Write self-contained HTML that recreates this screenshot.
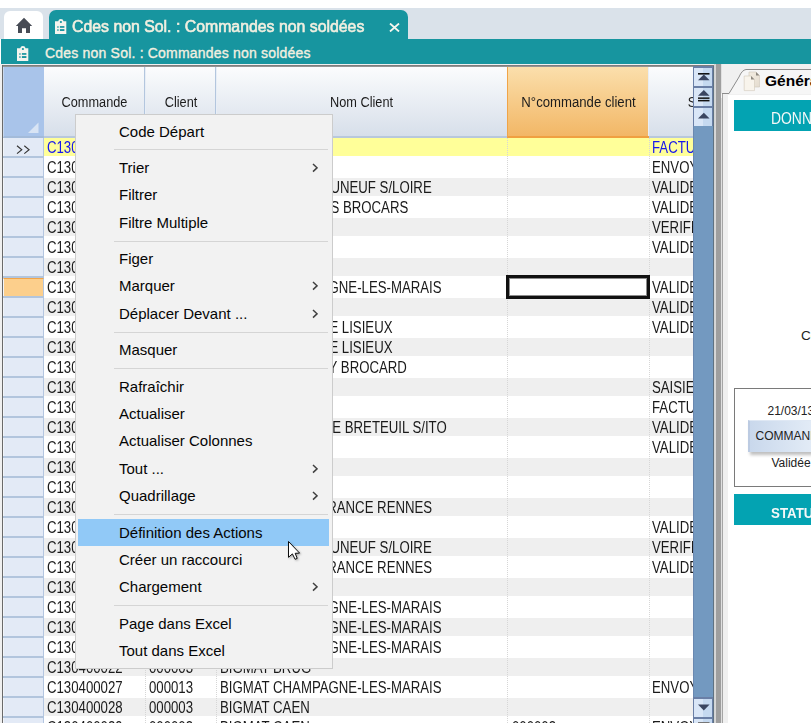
<!DOCTYPE html>
<html><head><meta charset="utf-8"><style>
*{box-sizing:border-box;margin:0;padding:0}
html,body{width:811px;height:723px;overflow:hidden;background:#fff;font-family:"Liberation Sans",sans-serif;position:relative}
.abs{position:absolute}
#tabbg{position:absolute;left:0;top:8px;width:811px;height:31px;background:#dae2ea}
#home{position:absolute;left:4px;top:11px;width:39px;height:30px;background:#fff;border-radius:6px 6px 0 0}
#tab{position:absolute;left:49px;top:10px;width:359px;height:31px;background:#17959f;border-radius:7px 7px 0 0}
#tabtxt{position:absolute;left:72px;top:18px;font-size:16px;color:#f2efe0;white-space:nowrap;transform:scaleX(0.99);transform-origin:0 0;-webkit-text-stroke:0.6px #f2efe0}
#tabx{position:absolute;left:389px;top:23px;width:11px;height:9px}
#bar{position:absolute;left:1px;top:39px;width:810px;height:25px;background:#17959f}
#bartxt{position:absolute;left:45px;top:45px;font-size:14px;color:#f2efe0;white-space:nowrap;letter-spacing:0.2px;-webkit-text-stroke:0.35px #f2efe0}
#main{position:absolute;left:0;top:64px;width:811px;height:659px;background:#f0f0f0}
#gridbg{position:absolute;left:2px;top:65px;width:692px;height:658px;background:#fff}
#gtop{position:absolute;left:2px;top:65px;width:712px;height:2px;background:linear-gradient(#737373,#a0a0a0)}
#gleft{position:absolute;left:2px;top:65px;width:1px;height:658px;background:#6a6a6a}
.bg{position:absolute;left:44px;width:649px;height:18px}
.rh{position:absolute;left:3px;width:41px;height:18px;border-left:1px solid #f2f5fa;border-right:1px solid #b4c6e0}
.rsep{position:absolute;left:3px;width:41px;height:2px;background:#b2c5dd}
.vl{position:absolute;top:138px;height:585px;width:1px;border-left:1px dotted #d6d6d6}
.c{position:absolute;height:18px;overflow:hidden;white-space:nowrap}
.t{display:inline-block;font-size:16px;line-height:18px;transform:scaleX(0.825);transform-origin:0 0;position:relative;top:1px}
.tr{transform-origin:100% 0}
.hd{position:absolute;top:67px;height:71px;background:linear-gradient(#fbfcfd,#d7dfea);border-bottom:2px solid #b8c8dc;overflow:hidden}
.hd span{position:absolute;top:26.5px;left:0;width:100%;text-align:center;font-size:14px;color:#1c1c1c;white-space:nowrap}
.hsep{position:absolute;top:67px;height:69px;width:2px;background:linear-gradient(90deg,#b3c6de 50%,#e8eef6 50%)}
#scroll{position:absolute;left:693px;top:66px;width:21px;height:657px;background:#7399c0;border-left:1px solid #6a88b0;border-right:1px solid #5f7282}
.sbf{position:absolute;left:693px;width:20px;height:20px;background:#6a7fa6}
.sbi{position:absolute;left:1px;top:2px;width:18px;height:17.5px;background:linear-gradient(90deg,#d9e6f7 50%,#c5d9f0 50%)}
.sbi svg{position:absolute;left:0;top:0}
#split{position:absolute;left:714px;top:64px;width:8px;height:659px;background:linear-gradient(90deg,#d2d2d2 0,#d8d8d8 2px,#9e9e9e 2px,#9e9e9e 7px,#e0e0e0 7px)}
#menu{position:absolute;left:75px;top:114px;width:258px;height:555px;background:#f2f2f2;border:1px solid #cccccc;padding:2.5px 3px 2px 2px;}
.mi{position:relative;height:27.4px;font-size:15px;color:#050505}
.mi.hl{background:#91c9f7}
.mt{position:absolute;left:41px;top:5px;white-space:nowrap}
.arr{position:absolute;left:233.5px;top:9px}
.msep{height:9px;position:relative}
.msep:after{content:"";position:absolute;left:36px;right:1px;top:4.5px;height:1px;background:#d5d5d5}
</style></head><body>
<div id="tabbg"></div>
<div id="home"></div>
<svg class="abs" style="left:15px;top:17px" width="18" height="17" viewBox="0 0 18 17"><path d="M9 0.8 L17.2 9 L15 9 L15 16 L11 16 L11 11.2 L7 11.2 L7 16 L3 16 L3 9 L0.8 9 Z" fill="#474b55"/></svg>
<div id="tab"></div>
<svg class="abs" style="left:54.6px;top:19px" width="12" height="16" viewBox="0 0 12 16"><path d="M0 2.3 H3.2 Q3.6 0 5.9 0 Q8.2 0 8.6 2.3 H11.3 V14.9 H0 Z" fill="#f4f4ee"/><circle cx="5.9" cy="3" r="1.1" fill="#17959f"/><rect x="2.4" y="7.1" width="1.1" height="1.8" fill="#17959f"/><rect x="4.9" y="7.1" width="4.5" height="1.7" fill="#17959f"/><rect x="2.4" y="10.1" width="1.1" height="1.9" fill="#17959f"/><rect x="4.9" y="10.1" width="4.5" height="1.9" fill="#17959f"/></svg>
<div id="tabtxt">Cdes non Sol. : Commandes non soldées</div>
<svg id="tabx" viewBox="0 0 11 9"><path d="M1 0.5 L10 8.5 M10 0.5 L1 8.5" stroke="#f6f6ee" stroke-width="1.8"/></svg>
<div id="bar"></div>
<svg class="abs" style="left:17px;top:45.5px" width="12" height="16" viewBox="0 0 12 16"><path d="M0 2.3 H3.2 Q3.6 0 5.9 0 Q8.2 0 8.6 2.3 H11.3 V14.9 H0 Z" fill="#f4f4ee"/><circle cx="5.9" cy="3" r="1.1" fill="#17959f"/><rect x="2.4" y="7.1" width="1.1" height="1.8" fill="#17959f"/><rect x="4.9" y="7.1" width="4.5" height="1.7" fill="#17959f"/><rect x="2.4" y="10.1" width="1.1" height="1.9" fill="#17959f"/><rect x="4.9" y="10.1" width="4.5" height="1.9" fill="#17959f"/></svg>
<div id="bartxt">Cdes non Sol. : Commandes non soldées</div>
<div id="main"></div>
<div id="gridbg"></div>
<div id="gtop"></div>
<div id="gleft"></div>
<div class="abs" style="left:3px;top:67px;width:41px;height:71px;background:#a9c4ea;border-bottom:2px solid #a3bbda;border-left:1px solid #c8d8ee"></div>
<svg class="abs" style="left:28px;top:122px" width="12" height="12"><path d="M0 11 L10.5 11 L10.5 0.5 Z" fill="#d8e4f4"/></svg>
<div class="hd" style="left:44px;width:101px"><span style="transform:scaleX(0.91)">Commande</span></div>
<div class="hd" style="left:145px;width:72px"><span style="transform:scaleX(0.91)">Client</span></div>
<div class="hd" style="left:216px;width:291px"><span style="transform:scaleX(0.91)">Nom Client</span></div>
<div class="hd" style="left:507px;width:142px;background:linear-gradient(#fbdfac,#f2b766);border-left:1px solid #f0a448;border-bottom:2px solid #f0a040"><span style="transform:scaleX(0.94)">N°commande client</span></div>
<div class="hd" style="left:649px;width:64px"><span style="transform:scaleX(0.91);left:0;width:111px">Statut</span></div>
<div class="hsep" style="left:144px"></div>
<div class="hsep" style="left:215px"></div>
<div class="hsep" style="left:648px;width:1px"></div>
<div class="bg" style="top:138px;background:#ffff99"></div><div class="rh" style="top:138px;background:#e3eaf6"></div><div class="rsep" style="top:156px"></div><svg class="abs" style="left:16px;top:145px" width="15" height="10"><path d="M1 0.8 L5.8 4.7 L1 8.6 M8.3 0.8 L13.1 4.7 L8.3 8.6" fill="none" stroke="#333" stroke-width="1.1"/></svg><div class="c" style="left:47px;width:98px;top:138px;color:#1717ee"><span class="t">C130400001</span></div><div class="c" style="left:149px;width:67px;top:138px;color:#1717ee"><span class="t">000003</span></div><div class="c" style="left:220px;width:287px;top:138px;color:#1717ee"><span class="t">BIGMAT CAEN</span></div><div class="c" style="left:652px;width:41px;top:138px;color:#1717ee"><span class="t">FACTURE</span></div><div class="bg" style="top:158px;background:#ffffff"></div><div class="rh" style="top:158px;background:#e3eaf6"></div><div class="rsep" style="top:176px"></div><div class="c" style="left:47px;width:98px;top:158px;color:#1a1a1a"><span class="t">C130400002</span></div><div class="c" style="left:149px;width:67px;top:158px;color:#1a1a1a"><span class="t">000003</span></div><div class="c" style="left:220px;width:287px;top:158px;color:#1a1a1a"><span class="t">BIGMAT CAEN</span></div><div class="c" style="left:652px;width:41px;top:158px;color:#1a1a1a"><span class="t">ENVOYE</span></div><div class="bg" style="top:178px;background:#efefef"></div><div class="rh" style="top:178px;background:#e3eaf6"></div><div class="rsep" style="top:196px"></div><div class="c" style="left:47px;width:98px;top:178px;color:#1a1a1a"><span class="t">C130400003</span></div><div class="c" style="left:149px;width:67px;top:178px;color:#1a1a1a"><span class="t">000003</span></div><div class="c" style="left:220px;width:212px;top:178px;color:#1a1a1a;text-align:right"><span class="t tr">UNEUF S/LOIRE</span></div><div class="c" style="left:652px;width:41px;top:178px;color:#1a1a1a"><span class="t">VALIDEE</span></div><div class="bg" style="top:198px;background:#ffffff"></div><div class="rh" style="top:198px;background:#e3eaf6"></div><div class="rsep" style="top:216px"></div><div class="c" style="left:47px;width:98px;top:198px;color:#1a1a1a"><span class="t">C130400004</span></div><div class="c" style="left:149px;width:67px;top:198px;color:#1a1a1a"><span class="t">000003</span></div><div class="c" style="left:220px;width:188.5px;top:198px;color:#1a1a1a;text-align:right"><span class="t tr">S BROCARS</span></div><div class="c" style="left:652px;width:41px;top:198px;color:#1a1a1a"><span class="t">VALIDEE</span></div><div class="bg" style="top:218px;background:#efefef"></div><div class="rh" style="top:218px;background:#e3eaf6"></div><div class="rsep" style="top:236px"></div><div class="c" style="left:47px;width:98px;top:218px;color:#1a1a1a"><span class="t">C130400005</span></div><div class="c" style="left:149px;width:67px;top:218px;color:#1a1a1a"><span class="t">000003</span></div><div class="c" style="left:220px;width:287px;top:218px;color:#1a1a1a"><span class="t">BIGMAT CAEN</span></div><div class="c" style="left:652px;width:41px;top:218px;color:#1a1a1a"><span class="t">VERIFIEE</span></div><div class="bg" style="top:238px;background:#ffffff"></div><div class="rh" style="top:238px;background:#e3eaf6"></div><div class="rsep" style="top:256px"></div><div class="c" style="left:47px;width:98px;top:238px;color:#1a1a1a"><span class="t">C130400006</span></div><div class="c" style="left:149px;width:67px;top:238px;color:#1a1a1a"><span class="t">000003</span></div><div class="c" style="left:220px;width:287px;top:238px;color:#1a1a1a"><span class="t">BIGMAT CAEN</span></div><div class="c" style="left:652px;width:41px;top:238px;color:#1a1a1a"><span class="t">VALIDEE</span></div><div class="bg" style="top:258px;background:#efefef"></div><div class="rh" style="top:258px;background:#e3eaf6"></div><div class="rsep" style="top:276px"></div><div class="c" style="left:47px;width:98px;top:258px;color:#1a1a1a"><span class="t">C130400007</span></div><div class="c" style="left:149px;width:67px;top:258px;color:#1a1a1a"><span class="t">000003</span></div><div class="c" style="left:220px;width:287px;top:258px;color:#1a1a1a"><span class="t">BIGMAT CAEN</span></div><div class="c" style="left:652px;width:41px;top:258px;color:#1a1a1a"><span class="t"></span></div><div class="bg" style="top:278px;background:#ffffff"></div><div class="rh" style="top:278px;background:#fccf8c;border-top:1px solid #f2a54a"></div><div class="rsep" style="top:296px"></div><div class="c" style="left:47px;width:98px;top:278px;color:#1a1a1a"><span class="t">C130400008</span></div><div class="c" style="left:149px;width:67px;top:278px;color:#1a1a1a"><span class="t">000003</span></div><div class="c" style="left:220px;width:287px;top:278px;color:#1a1a1a"><span class="t">BIGMAT CHAMPAGNE-LES-MARAIS</span></div><div class="c" style="left:652px;width:41px;top:278px;color:#1a1a1a"><span class="t">VALIDEE</span></div><div class="bg" style="top:298px;background:#efefef"></div><div class="rh" style="top:298px;background:#e3eaf6"></div><div class="rsep" style="top:316px"></div><div class="c" style="left:47px;width:98px;top:298px;color:#1a1a1a"><span class="t">C130400009</span></div><div class="c" style="left:149px;width:67px;top:298px;color:#1a1a1a"><span class="t">000003</span></div><div class="c" style="left:220px;width:287px;top:298px;color:#1a1a1a"><span class="t">BIGMAT CAEN</span></div><div class="c" style="left:652px;width:41px;top:298px;color:#1a1a1a"><span class="t">VALIDEE</span></div><div class="bg" style="top:318px;background:#ffffff"></div><div class="rh" style="top:318px;background:#e3eaf6"></div><div class="rsep" style="top:336px"></div><div class="c" style="left:47px;width:98px;top:318px;color:#1a1a1a"><span class="t">C130400010</span></div><div class="c" style="left:149px;width:67px;top:318px;color:#1a1a1a"><span class="t">000003</span></div><div class="c" style="left:220px;width:172.5px;top:318px;color:#1a1a1a;text-align:right"><span class="t tr">E LISIEUX</span></div><div class="c" style="left:652px;width:41px;top:318px;color:#1a1a1a"><span class="t">VALIDEE</span></div><div class="bg" style="top:338px;background:#efefef"></div><div class="rh" style="top:338px;background:#e3eaf6"></div><div class="rsep" style="top:356px"></div><div class="c" style="left:47px;width:98px;top:338px;color:#1a1a1a"><span class="t">C130400011</span></div><div class="c" style="left:149px;width:67px;top:338px;color:#1a1a1a"><span class="t">000003</span></div><div class="c" style="left:220px;width:172.5px;top:338px;color:#1a1a1a;text-align:right"><span class="t tr">E LISIEUX</span></div><div class="c" style="left:652px;width:41px;top:338px;color:#1a1a1a"><span class="t"></span></div><div class="bg" style="top:358px;background:#ffffff"></div><div class="rh" style="top:358px;background:#e3eaf6"></div><div class="rsep" style="top:376px"></div><div class="c" style="left:47px;width:98px;top:358px;color:#1a1a1a"><span class="t">C130400012</span></div><div class="c" style="left:149px;width:67px;top:358px;color:#1a1a1a"><span class="t">000003</span></div><div class="c" style="left:220px;width:187px;top:358px;color:#1a1a1a;text-align:right"><span class="t tr">Y BROCARD</span></div><div class="c" style="left:652px;width:41px;top:358px;color:#1a1a1a"><span class="t"></span></div><div class="bg" style="top:378px;background:#efefef"></div><div class="rh" style="top:378px;background:#e3eaf6"></div><div class="rsep" style="top:396px"></div><div class="c" style="left:47px;width:98px;top:378px;color:#1a1a1a"><span class="t">C130400013</span></div><div class="c" style="left:149px;width:67px;top:378px;color:#1a1a1a"><span class="t">000003</span></div><div class="c" style="left:220px;width:287px;top:378px;color:#1a1a1a"><span class="t">BIGMAT CAEN</span></div><div class="c" style="left:652px;width:41px;top:378px;color:#1a1a1a"><span class="t">SAISIE</span></div><div class="bg" style="top:398px;background:#ffffff"></div><div class="rh" style="top:398px;background:#e3eaf6"></div><div class="rsep" style="top:416px"></div><div class="c" style="left:47px;width:98px;top:398px;color:#1a1a1a"><span class="t">C130400014</span></div><div class="c" style="left:149px;width:67px;top:398px;color:#1a1a1a"><span class="t">000003</span></div><div class="c" style="left:220px;width:287px;top:398px;color:#1a1a1a"><span class="t">BIGMAT CAEN</span></div><div class="c" style="left:652px;width:41px;top:398px;color:#1a1a1a"><span class="t">FACTURE</span></div><div class="bg" style="top:418px;background:#efefef"></div><div class="rh" style="top:418px;background:#e3eaf6"></div><div class="rsep" style="top:436px"></div><div class="c" style="left:47px;width:98px;top:418px;color:#1a1a1a"><span class="t">C130400015</span></div><div class="c" style="left:149px;width:67px;top:418px;color:#1a1a1a"><span class="t">000003</span></div><div class="c" style="left:220px;width:227px;top:418px;color:#1a1a1a;text-align:right"><span class="t tr">E BRETEUIL S/ITO</span></div><div class="c" style="left:652px;width:41px;top:418px;color:#1a1a1a"><span class="t">VALIDEE</span></div><div class="bg" style="top:438px;background:#ffffff"></div><div class="rh" style="top:438px;background:#e3eaf6"></div><div class="rsep" style="top:456px"></div><div class="c" style="left:47px;width:98px;top:438px;color:#1a1a1a"><span class="t">C130400016</span></div><div class="c" style="left:149px;width:67px;top:438px;color:#1a1a1a"><span class="t">000003</span></div><div class="c" style="left:220px;width:287px;top:438px;color:#1a1a1a"><span class="t">BIGMAT CAEN</span></div><div class="c" style="left:652px;width:41px;top:438px;color:#1a1a1a"><span class="t">VALIDEE</span></div><div class="bg" style="top:458px;background:#efefef"></div><div class="rh" style="top:458px;background:#e3eaf6"></div><div class="rsep" style="top:476px"></div><div class="c" style="left:47px;width:98px;top:458px;color:#1a1a1a"><span class="t">C130400017</span></div><div class="c" style="left:149px;width:67px;top:458px;color:#1a1a1a"><span class="t">000003</span></div><div class="c" style="left:220px;width:287px;top:458px;color:#1a1a1a"><span class="t">BIGMAT CAEN</span></div><div class="c" style="left:652px;width:41px;top:458px;color:#1a1a1a"><span class="t"></span></div><div class="bg" style="top:478px;background:#ffffff"></div><div class="rh" style="top:478px;background:#e3eaf6"></div><div class="rsep" style="top:496px"></div><div class="c" style="left:47px;width:98px;top:478px;color:#1a1a1a"><span class="t">C130400018</span></div><div class="c" style="left:149px;width:67px;top:478px;color:#1a1a1a"><span class="t">000003</span></div><div class="c" style="left:220px;width:287px;top:478px;color:#1a1a1a"><span class="t">BIGMAT CAEN</span></div><div class="c" style="left:652px;width:41px;top:478px;color:#1a1a1a"><span class="t"></span></div><div class="bg" style="top:498px;background:#efefef"></div><div class="rh" style="top:498px;background:#e3eaf6"></div><div class="rsep" style="top:516px"></div><div class="c" style="left:47px;width:98px;top:498px;color:#1a1a1a"><span class="t">C130400019</span></div><div class="c" style="left:149px;width:67px;top:498px;color:#1a1a1a"><span class="t">000003</span></div><div class="c" style="left:220px;width:212px;top:498px;color:#1a1a1a;text-align:right"><span class="t tr">RANCE RENNES</span></div><div class="c" style="left:652px;width:41px;top:498px;color:#1a1a1a"><span class="t"></span></div><div class="bg" style="top:518px;background:#ffffff"></div><div class="rh" style="top:518px;background:#e3eaf6"></div><div class="rsep" style="top:536px"></div><div class="c" style="left:47px;width:98px;top:518px;color:#1a1a1a"><span class="t">C130400020</span></div><div class="c" style="left:149px;width:67px;top:518px;color:#1a1a1a"><span class="t">000003</span></div><div class="c" style="left:220px;width:287px;top:518px;color:#1a1a1a"><span class="t">BIGMAT CAEN</span></div><div class="c" style="left:652px;width:41px;top:518px;color:#1a1a1a"><span class="t">VALIDEE</span></div><div class="bg" style="top:538px;background:#efefef"></div><div class="rh" style="top:538px;background:#e3eaf6"></div><div class="rsep" style="top:556px"></div><div class="c" style="left:47px;width:98px;top:538px;color:#1a1a1a"><span class="t">C130400021</span></div><div class="c" style="left:149px;width:67px;top:538px;color:#1a1a1a"><span class="t">000003</span></div><div class="c" style="left:220px;width:212px;top:538px;color:#1a1a1a;text-align:right"><span class="t tr">UNEUF S/LOIRE</span></div><div class="c" style="left:652px;width:41px;top:538px;color:#1a1a1a"><span class="t">VERIFIEE</span></div><div class="bg" style="top:558px;background:#ffffff"></div><div class="rh" style="top:558px;background:#e3eaf6"></div><div class="rsep" style="top:576px"></div><div class="c" style="left:47px;width:98px;top:558px;color:#1a1a1a"><span class="t">C130400022</span></div><div class="c" style="left:149px;width:67px;top:558px;color:#1a1a1a"><span class="t">000003</span></div><div class="c" style="left:220px;width:212px;top:558px;color:#1a1a1a;text-align:right"><span class="t tr">RANCE RENNES</span></div><div class="c" style="left:652px;width:41px;top:558px;color:#1a1a1a"><span class="t">VALIDEE</span></div><div class="bg" style="top:578px;background:#efefef"></div><div class="rh" style="top:578px;background:#e3eaf6"></div><div class="rsep" style="top:596px"></div><div class="c" style="left:47px;width:98px;top:578px;color:#1a1a1a"><span class="t">C130400023</span></div><div class="c" style="left:149px;width:67px;top:578px;color:#1a1a1a"><span class="t">000003</span></div><div class="c" style="left:220px;width:287px;top:578px;color:#1a1a1a"><span class="t">BIGMAT CAEN</span></div><div class="c" style="left:652px;width:41px;top:578px;color:#1a1a1a"><span class="t"></span></div><div class="bg" style="top:598px;background:#ffffff"></div><div class="rh" style="top:598px;background:#e3eaf6"></div><div class="rsep" style="top:616px"></div><div class="c" style="left:47px;width:98px;top:598px;color:#1a1a1a"><span class="t">C130400024</span></div><div class="c" style="left:149px;width:67px;top:598px;color:#1a1a1a"><span class="t">000003</span></div><div class="c" style="left:220px;width:287px;top:598px;color:#1a1a1a"><span class="t">BIGMAT CHAMPAGNE-LES-MARAIS</span></div><div class="c" style="left:652px;width:41px;top:598px;color:#1a1a1a"><span class="t"></span></div><div class="bg" style="top:618px;background:#efefef"></div><div class="rh" style="top:618px;background:#e3eaf6"></div><div class="rsep" style="top:636px"></div><div class="c" style="left:47px;width:98px;top:618px;color:#1a1a1a"><span class="t">C130400025</span></div><div class="c" style="left:149px;width:67px;top:618px;color:#1a1a1a"><span class="t">000003</span></div><div class="c" style="left:220px;width:287px;top:618px;color:#1a1a1a"><span class="t">BIGMAT CHAMPAGNE-LES-MARAIS</span></div><div class="c" style="left:652px;width:41px;top:618px;color:#1a1a1a"><span class="t"></span></div><div class="bg" style="top:638px;background:#ffffff"></div><div class="rh" style="top:638px;background:#e3eaf6"></div><div class="rsep" style="top:656px"></div><div class="c" style="left:47px;width:98px;top:638px;color:#1a1a1a"><span class="t">C130400026</span></div><div class="c" style="left:149px;width:67px;top:638px;color:#1a1a1a"><span class="t">000003</span></div><div class="c" style="left:220px;width:287px;top:638px;color:#1a1a1a"><span class="t">BIGMAT CHAMPAGNE-LES-MARAIS</span></div><div class="c" style="left:652px;width:41px;top:638px;color:#1a1a1a"><span class="t"></span></div><div class="bg" style="top:658px;background:#efefef"></div><div class="rh" style="top:658px;background:#e3eaf6"></div><div class="rsep" style="top:676px"></div><div class="c" style="left:47px;width:98px;top:658px;color:#1a1a1a"><span class="t">C130400022</span></div><div class="c" style="left:149px;width:67px;top:658px;color:#1a1a1a"><span class="t">000003</span></div><div class="c" style="left:220px;width:287px;top:658px;color:#1a1a1a"><span class="t">BIGMAT BRUG</span></div><div class="c" style="left:652px;width:41px;top:658px;color:#1a1a1a"><span class="t"></span></div><div class="bg" style="top:678px;background:#ffffff"></div><div class="rh" style="top:678px;background:#e3eaf6"></div><div class="rsep" style="top:696px"></div><div class="c" style="left:47px;width:98px;top:678px;color:#1a1a1a"><span class="t">C130400027</span></div><div class="c" style="left:149px;width:67px;top:678px;color:#1a1a1a"><span class="t">000013</span></div><div class="c" style="left:220px;width:287px;top:678px;color:#1a1a1a"><span class="t">BIGMAT CHAMPAGNE-LES-MARAIS</span></div><div class="c" style="left:652px;width:41px;top:678px;color:#1a1a1a"><span class="t">ENVOYE</span></div><div class="bg" style="top:698px;background:#efefef"></div><div class="rh" style="top:698px;background:#e3eaf6"></div><div class="rsep" style="top:716px"></div><div class="c" style="left:47px;width:98px;top:698px;color:#1a1a1a"><span class="t">C130400028</span></div><div class="c" style="left:149px;width:67px;top:698px;color:#1a1a1a"><span class="t">000003</span></div><div class="c" style="left:220px;width:287px;top:698px;color:#1a1a1a"><span class="t">BIGMAT CAEN</span></div><div class="c" style="left:652px;width:41px;top:698px;color:#1a1a1a"><span class="t"></span></div><div class="bg" style="top:718px;background:#ffffff"></div><div class="rh" style="top:718px;background:#e3eaf6"></div><div class="rsep" style="top:736px"></div><div class="c" style="left:47px;width:98px;top:718px;color:#1a1a1a"><span class="t">C130400029</span></div><div class="c" style="left:149px;width:67px;top:718px;color:#1a1a1a"><span class="t">000003</span></div><div class="c" style="left:220px;width:287px;top:718px;color:#1a1a1a"><span class="t">BIGMAT CAEN</span></div><div class="c" style="left:512px;width:130px;top:718px;color:#1a1a1a"><span class="t">000003</span></div><div class="c" style="left:652px;width:41px;top:718px;color:#1a1a1a"><span class="t">ENVOYE</span></div>
<div class="vl" style="left:145px"></div><div class="vl" style="left:216px"></div><div class="vl" style="left:507px"></div><div class="vl" style="left:649px"></div>
<div class="abs" style="left:506px;top:275px;width:144px;height:24px;border:3px solid #111;box-shadow:inset 0 0 0 1px rgba(0,0,0,0.45)"></div>
<div id="scroll"></div>
<div class="sbf" style="top:66px"><div class="sbi"><svg width="19" height="17" viewBox="0 0 19 17"><rect x="4" y="5" width="11.5" height="1.6" fill="#111"/><path d="M4 12.2 L9.8 6.4 L15.6 12.2 Z" fill="#3a4560"/></svg></div></div><div class="sbf" style="top:86px"><div class="sbi"><svg width="19" height="17" viewBox="0 0 19 17"><path d="M4 7.8 L9.8 2 L15.6 7.8 Z" fill="#3a4560"/><rect x="4" y="9.4" width="11.5" height="1.5" fill="#111"/><rect x="4" y="11.9" width="11.5" height="1.5" fill="#111"/></svg></div></div><div class="sbf" style="top:106px"><div class="sbi"><svg width="19" height="17" viewBox="0 0 19 17"><path d="M4 10.6 L9.8 4.8 L15.6 10.6 Z" fill="#3a4560"/></svg></div></div><div class="sbf" style="top:697px"><div class="sbi"><svg width="19" height="17" viewBox="0 0 19 17"><path d="M4 5.5 L9.8 11.5 L15.6 5.5 Z" fill="#3a4560"/></svg></div></div><div class="sbf" style="top:717px"><div class="sbi"><svg width="19" height="17" viewBox="0 0 19 17"><rect x="4" y="3" width="11.5" height="1.5" fill="#777"/></svg></div></div>
<div id="split"></div>
<svg class="abs" style="left:721px;top:68px" width="90" height="30"><path d="M0 25.5 L8 25.5 L18 9 Q21 2 25 1.5 L90 1.5 L90 30 L0 30 Z" fill="#f6f6f6"/><path d="M1 25.5 L8 25.5 L18 9 Q21 2 25 1.5 L90 1.5" fill="none" stroke="#8c8c8c" stroke-width="1"/></svg>
<div class="abs" style="left:722px;top:94px;width:89px;height:629px;border-left:1px solid #a6a6a6;background:#f0f0f0"></div>
<div class="abs" style="left:728px;top:95px;width:83px;height:628px;background:#fff"></div>
<svg class="abs" style="left:743px;top:71px" width="18" height="21" viewBox="0 0 18 21"><defs><linearGradient id="pg" x1="0" y1="0" x2="1" y2="1"><stop offset="0" stop-color="#f3ede2"/><stop offset="1" stop-color="#e4dccf"/></linearGradient></defs><path d="M6 1 L13 1 L16.5 4.5 L16.5 16 L6 16 Z" fill="url(#pg)" stroke="#cfc6b8" stroke-width="0.6"/><path d="M13 1 L13 4.5 L16.5 4.5 Z" fill="#8d8880"/><path d="M1.2 5 L8 5 L11.5 8.5 L11.5 19.6 L1.2 19.6 Z" fill="#f8f4ec" stroke="#d2c9bb" stroke-width="0.6"/><path d="M8 5 L8 8.5 L11.5 8.5 Z" fill="#8d8880"/></svg>
<div class="abs" style="left:765px;top:71.5px;font-size:15.5px;font-weight:bold;color:#000;white-space:nowrap">Généra</div>
<div class="abs" style="left:734px;top:100px;width:77px;height:31px;background:#03a3b2"></div>
<div class="abs" style="left:770.5px;top:110px;font-size:15.8px;color:#f4f8f8;white-space:nowrap;transform:scaleX(0.88);transform-origin:0 0">DONNEES</div>
<div class="abs" style="left:801px;top:328px;font-size:13.5px;color:#222;white-space:nowrap">Commande</div>
<div class="abs" style="left:734px;top:388px;width:77px;height:99px;border:1px solid #7a7a7a;border-right:none;background:#fff"></div>
<div class="abs" style="left:767.5px;top:404px;font-size:12px;color:#222;white-space:nowrap">21/03/13</div>
<div class="abs" style="left:748px;top:420px;width:63px;height:32px;background:linear-gradient(90deg,#c9d8ec,#e2ebf6);box-shadow:2px 3px 3px rgba(0,0,0,0.25);border-top:1px solid #dfe8f4;border-left:2px solid #bccbe2"></div>
<div class="abs" style="left:755.5px;top:429px;font-size:12px;color:#222;white-space:nowrap">COMMANDE</div>
<div class="abs" style="left:771.5px;top:456px;font-size:12px;color:#222;white-space:nowrap">Validée</div>
<div class="abs" style="left:734px;top:494px;width:77px;height:31px;background:#03a3b2"></div>
<div class="abs" style="left:771px;top:503.5px;font-size:15.5px;font-weight:bold;color:#f4f8f8;white-space:nowrap;transform:scaleX(0.86);transform-origin:0 0">STATUT</div>
<div id="menu"><div class="mi"><span class="mt">Code Départ</span></div><div class="msep"></div><div class="mi"><span class="mt">Trier</span><svg class="arr" width="6" height="10" viewBox="0 0 6 10"><path d="M1 1 L5 4.8 L1 8.6" fill="none" stroke="#404040" stroke-width="1.5"/></svg></div><div class="mi"><span class="mt">Filtrer</span></div><div class="mi"><span class="mt">Filtre Multiple</span></div><div class="msep"></div><div class="mi"><span class="mt">Figer</span></div><div class="mi"><span class="mt">Marquer</span><svg class="arr" width="6" height="10" viewBox="0 0 6 10"><path d="M1 1 L5 4.8 L1 8.6" fill="none" stroke="#404040" stroke-width="1.5"/></svg></div><div class="mi"><span class="mt">Déplacer Devant ...</span><svg class="arr" width="6" height="10" viewBox="0 0 6 10"><path d="M1 1 L5 4.8 L1 8.6" fill="none" stroke="#404040" stroke-width="1.5"/></svg></div><div class="msep"></div><div class="mi"><span class="mt">Masquer</span></div><div class="msep"></div><div class="mi"><span class="mt">Rafraîchir</span></div><div class="mi"><span class="mt">Actualiser</span></div><div class="mi"><span class="mt">Actualiser Colonnes</span></div><div class="mi"><span class="mt">Tout ...</span><svg class="arr" width="6" height="10" viewBox="0 0 6 10"><path d="M1 1 L5 4.8 L1 8.6" fill="none" stroke="#404040" stroke-width="1.5"/></svg></div><div class="mi"><span class="mt">Quadrillage</span><svg class="arr" width="6" height="10" viewBox="0 0 6 10"><path d="M1 1 L5 4.8 L1 8.6" fill="none" stroke="#404040" stroke-width="1.5"/></svg></div><div class="msep"></div><div class="mi hl"><span class="mt">Définition des Actions</span></div><div class="mi"><span class="mt">Créer un raccourci</span></div><div class="mi"><span class="mt">Chargement</span><svg class="arr" width="6" height="10" viewBox="0 0 6 10"><path d="M1 1 L5 4.8 L1 8.6" fill="none" stroke="#404040" stroke-width="1.5"/></svg></div><div class="msep"></div><div class="mi"><span class="mt">Page dans Excel</span></div><div class="mi"><span class="mt">Tout dans Excel</span></div></div>
<svg class="abs" style="left:287px;top:540px;filter:drop-shadow(1px 1px 1px rgba(0,0,0,0.3))" width="18" height="24" viewBox="0 0 18 24"><path d="M1.5 1.5 L1.5 17.3 L5.4 13.9 L8.1 19.3 L10.2 18.4 L8.2 13.3 L12.6 13.1 Z" fill="#fff" stroke="#000" stroke-width="0.95" stroke-linejoin="round"/></svg>
</body></html>
